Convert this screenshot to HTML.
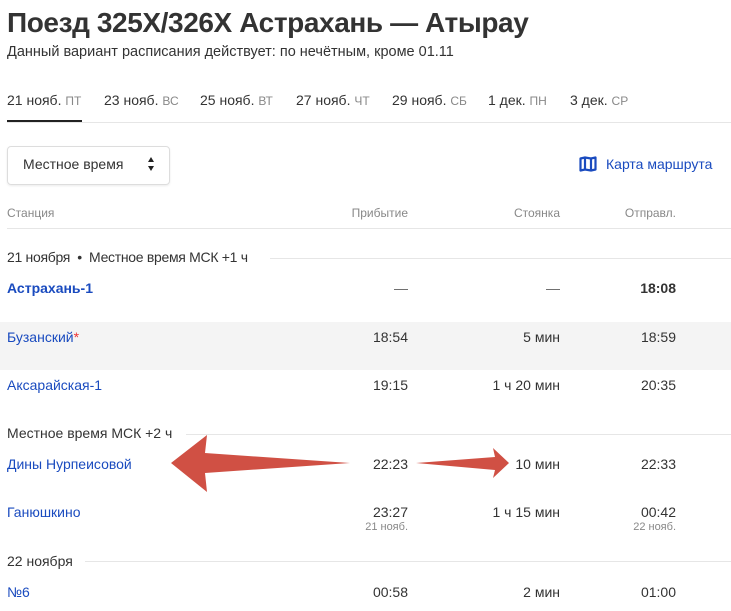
<!DOCTYPE html>
<html><head><meta charset="utf-8"><style>
body{margin:0;width:731px;height:611px;background:#fff;font-family:"Liberation Sans",sans-serif;color:#333;position:relative;overflow:hidden}
.a{position:absolute;white-space:nowrap;line-height:1}
.r{text-align:right}
.b{color:#1a4bbf}
.g{color:#888}
.ln{position:absolute;height:1px;background:#e6e6e6}
</style></head><body>
<div class="a" style="left:7px;top:9px;font-size:28px;font-weight:bold;color:#333;letter-spacing:-0.4px">Поезд 325X/326X Астрахань — Атырау</div>
<div class="a" style="left:7px;top:45px;font-size:14.5px">Данный вариант расписания действует: по нечётным, кроме 01.11</div>

<div class="a" style="left:7px;top:93px;font-size:14px">21 нояб. <span class="g" style="font-size:12px">ПТ</span></div>
<div class="a" style="left:104px;top:93px;font-size:14px">23 нояб. <span class="g" style="font-size:12px">ВС</span></div>
<div class="a" style="left:200px;top:93px;font-size:14px">25 нояб. <span class="g" style="font-size:12px">ВТ</span></div>
<div class="a" style="left:296px;top:93px;font-size:14px">27 нояб. <span class="g" style="font-size:12px">ЧТ</span></div>
<div class="a" style="left:392px;top:93px;font-size:14px">29 нояб. <span class="g" style="font-size:12px">СБ</span></div>
<div class="a" style="left:488px;top:93px;font-size:14px">1 дек. <span class="g" style="font-size:12px">ПН</span></div>
<div class="a" style="left:570px;top:93px;font-size:14px">3 дек. <span class="g" style="font-size:12px">СР</span></div>
<div class="ln" style="left:7px;right:0;top:122px"></div>
<div style="position:absolute;left:7px;top:120px;width:75px;height:2px;background:#222"></div>

<div style="position:absolute;left:7px;top:146px;width:161px;height:37px;border:1px solid #ddd;border-radius:4px;box-shadow:0 1px 2px rgba(0,0,0,.08)"></div>
<div class="a" style="left:23px;top:157px;font-size:14px">Местное время</div>
<svg style="position:absolute;left:147px;top:156px" width="8" height="16"><path d="M4 1L7 6H1Z M4 15L7 10H1Z" fill="#222"/></svg>

<svg style="position:absolute;left:579px;top:156px" width="18" height="16" viewBox="0 0 18 16"><path d="M1.5 2.5L6 1.5L12 2.5L16.5 1.5V13.5L12 14.5L6 13.5L1.5 14.5Z M6 1.5V13.5 M12 2.5V14.5" fill="none" stroke="#1a4bbf" stroke-width="2.2" stroke-linejoin="round"/></svg>
<div class="a b" style="left:606px;top:157px;font-size:14px">Карта маршрута</div>

<div class="a g" style="left:7px;top:207px;font-size:12px">Станция</div>
<div class="a g r" style="right:323px;top:207px;font-size:12px">Прибытие</div>
<div class="a g r" style="right:171px;top:207px;font-size:12px">Стоянка</div>
<div class="a g r" style="right:55px;top:207px;font-size:12px">Отправл.</div>
<div class="ln" style="left:7px;right:0;top:228px"></div>

<div class="a" style="left:7px;top:250px;font-size:14px;letter-spacing:-0.3px">21 ноября &nbsp;•&nbsp; Местное время МСК +1 ч</div>
<div class="ln" style="left:270px;right:0;top:258px"></div>

<div style="position:absolute;left:0;right:0;top:322px;height:48px;background:#f4f4f4"></div>

<div class="a b" style="left:7px;top:281px;font-size:14px;font-weight:bold">Астрахань-1</div>
<div class="a r" style="right:323px;top:281px;font-size:14px;color:#666">—</div>
<div class="a r" style="right:171px;top:281px;font-size:14px;color:#666">—</div>
<div class="a r" style="right:55px;top:281px;font-size:14px;font-weight:bold">18:08</div>

<div class="a b" style="left:7px;top:330px;font-size:14px">Бузанский<span style="color:#e33">*</span></div>
<div class="a r" style="right:323px;top:330px;font-size:14px">18:54</div>
<div class="a r" style="right:171px;top:330px;font-size:14px">5 мин</div>
<div class="a r" style="right:55px;top:330px;font-size:14px">18:59</div>

<div class="a b" style="left:7px;top:378px;font-size:14px">Аксарайская-1</div>
<div class="a r" style="right:323px;top:378px;font-size:14px">19:15</div>
<div class="a r" style="right:171px;top:378px;font-size:14px">1 ч 20 мин</div>
<div class="a r" style="right:55px;top:378px;font-size:14px">20:35</div>

<div class="a" style="left:7px;top:426px;font-size:14px">Местное время МСК +2 ч</div>
<div class="ln" style="left:186px;right:0;top:434px"></div>

<div class="a b" style="left:7px;top:457px;font-size:14px">Дины Нурпеисовой</div>
<div class="a r" style="right:323px;top:457px;font-size:14px">22:23</div>
<div class="a r" style="right:171px;top:457px;font-size:14px">10 мин</div>
<div class="a r" style="right:55px;top:457px;font-size:14px">22:33</div>

<div class="a b" style="left:7px;top:505px;font-size:14px">Ганюшкино</div>
<div class="a r" style="right:323px;top:505px;font-size:14px">23:27</div>
<div class="a r g" style="right:323px;top:522px;font-size:11px">21 нояб.</div>
<div class="a r" style="right:171px;top:505px;font-size:14px">1 ч 15 мин</div>
<div class="a r" style="right:55px;top:505px;font-size:14px">00:42</div>
<div class="a r g" style="right:55px;top:522px;font-size:11px">22 нояб.</div>

<div class="a" style="left:7px;top:554px;font-size:14px">22 ноября</div>
<div class="ln" style="left:85px;right:0;top:561px"></div>

<div class="a b" style="left:7px;top:585px;font-size:14px">№6</div>
<div class="a r" style="right:323px;top:585px;font-size:14px">00:58</div>
<div class="a r" style="right:171px;top:585px;font-size:14px">2 мин</div>
<div class="a r" style="right:55px;top:585px;font-size:14px">01:00</div>

<svg style="position:absolute;left:0;top:0" width="731" height="611">
<path d="M171 463L207 435L205 453L350 463L205 473L207 492Z" fill="#d05044"/>
<path d="M416 463L495 457L493 448L509 463L493 478L495 470Z" fill="#d05044"/>
</svg>
</body></html>
